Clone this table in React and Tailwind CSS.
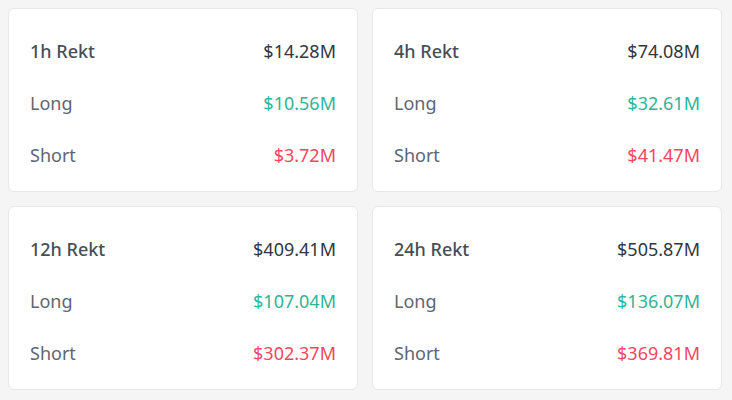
import React from "react";

const cards = [
  { title: "1h Rekt", total: "$14.28M", long: "$10.56M", short: "$3.72M" },
  { title: "4h Rekt", total: "$74.08M", long: "$32.61M", short: "$41.47M" },
  { title: "12h Rekt", total: "$409.41M", long: "$107.04M", short: "$302.37M" },
  { title: "24h Rekt", total: "$505.87M", long: "$136.07M", short: "$369.81M" },
];

function Card({ c }) {
  return (
    <div className="h-[184px] rounded-md border border-[#e6e8ea] bg-white pt-4 pb-[10px] pl-[21px] pr-[21px]">
      <div className="flex h-[52px] items-center justify-between">
        <span className="font-medium text-[#474d57]">{c.title}</span>
        <span className="text-[#32373e]">{c.total}</span>
      </div>
      <div className="flex h-[52px] items-center justify-between">
        <span className="text-[#5e6673]">Long</span>
        <span className="text-[#2fb596]">{c.long}</span>
      </div>
      <div className="flex h-[52px] items-center justify-between">
        <span className="text-[#5e6673]">Short</span>
        <span className="text-[#f6465d]">{c.short}</span>
      </div>
    </div>
  );
}

export default function App() {
  return (
    <div
      className="h-[400px] w-[732px] bg-[#f5f5f5] pt-2 pl-2 pr-[10px] text-[18px] leading-6"
      style={{ fontFamily: '"Noto Sans", "Open Sans", sans-serif' }}
    >
      <div className="grid grid-cols-2 gap-[14px]">
        {cards.map((c) => (
          <Card key={c.title} c={c} />
        ))}
      </div>
    </div>
  );
}
